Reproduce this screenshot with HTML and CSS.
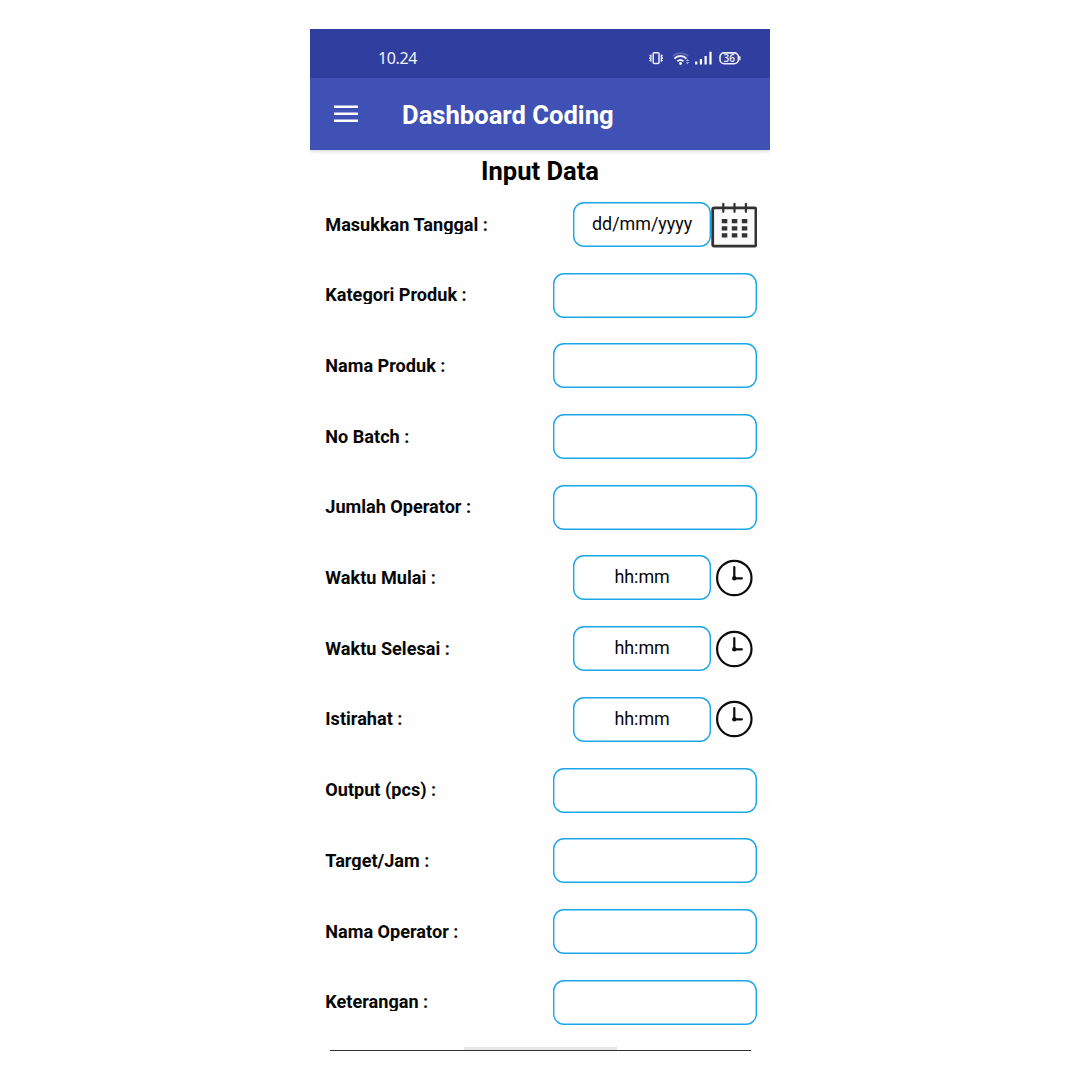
FILE: index.html
```html
<!DOCTYPE html>
<html lang="id">
<head>
<meta charset="utf-8">
<title>Dashboard Coding</title>
<link rel="stylesheet" href="styles.css">
</head>
<body>
<svg class="defs" width="0" height="0">
  <symbol id="clock" viewBox="0 0 46 46">
    <circle cx="23.300" cy="23" r="17.200" fill="none" stroke="#0b0b0b" stroke-width="2.200"/>
    <path d="M23.300 12v11.300h7.600" fill="none" stroke="#0b0b0b" stroke-width="2.200" stroke-linecap="round"/>
    <circle cx="23.300" cy="23.200" r="2.200" fill="#0b0b0b"/>
  </symbol>
</svg>
<main class="phone">
  <div class="status">
    <span class="time">10.24</span>
    <svg class="indicators" width="94" height="16" viewBox="0 0 94 16" fill="none" stroke="#eceefa">
      <rect x="5.200" y="2.700" width="5.800" height="10.800" rx="1" stroke-width="1.500"/>
      <path d="M2.900 4.500v7.300M13.300 4.500v7.300" stroke-width="1.300"/>
      <path d="M1.500 5.200l1 1.400-1 1.500 1 1.400-1 1.500M14.700 5.200l-1 1.400 1 1.500-1 1.400 1 1.500" stroke-width="1"/>
      <path d="M24.800 6.200a11.300 11.300 0 0 1 15.400 0" stroke="#5966b5" stroke-width="1.600"/>
      <path d="M26.400 8.600a8.400 8.400 0 0 1 12 0" stroke-width="2"/>
      <path d="M29.300 11.300a4.700 4.700 0 0 1 6.200 0" stroke-width="1.900"/>
      <circle cx="32.500" cy="13.500" r="1.400" fill="#fff" stroke="none"/>
      <path d="M37.800 11l1.700-2 1.700 2zM37.800 12.200l1.700 2 1.700-2z" fill="#b4bbe2" stroke="none"/>
      <path d="M48.200 14.500v-3M52.900 14.500v-5.500M57.600 14.500v-8.500M62.500 14.500V1.800" stroke="#fff" stroke-width="2.200"/>
      <rect x="72" y="2.900" width="18.400" height="10.800" rx="4.200" stroke-width="1.600"/>
      <path d="M91.800 6.300v4" stroke-width="1.400"/>
      <text class="battery" x="81.200" y="12" text-anchor="middle">36</text>
    </svg>
  </div>
  <header class="appbar">
    <svg class="menu" width="24" height="18" viewBox="0 0 24 18"><path d="M0 1.700h24M0 8.700h24M0 15.700h24" stroke="#fff" stroke-width="2.500"/></svg>
    <h1>Dashboard Coding</h1>
  </header>
  <section class="content">
    <h2>Input Data</h2>
    <div class="row"><label>Masukkan Tanggal :</label><div class="field short"><span class="date">dd/mm/yyyy</span></div>
      <svg class="icon" viewBox="0 0 46 46">
        <rect x="1.700" y="5.900" width="43.200" height="38.200" rx="1.500" fill="#fafafa" stroke="#333" stroke-width="2.800"/>
        <path d="M12.300 1.800v8M23.500 1.800v8M34.900 1.800v8" stroke="#333" stroke-width="2.200" stroke-linecap="round"/>
        <path d="M10.800 19.200h25.500M10.800 26.300h25.500M10.800 33.400h25.500" stroke="#333" stroke-width="4.300" stroke-dasharray="5.500 4.500"/>
      </svg></div>
    <div class="row"><label>Kategori Produk :</label><div class="field"></div></div>
    <div class="row"><label>Nama Produk :</label><div class="field"></div></div>
    <div class="row"><label>No Batch :</label><div class="field"></div></div>
    <div class="row"><label>Jumlah Operator :</label><div class="field"></div></div>
    <div class="row"><label>Waktu Mulai :</label><div class="field short"><span>hh:mm</span></div><svg class="icon"><use href="#clock"/></svg></div>
    <div class="row"><label>Waktu Selesai :</label><div class="field short"><span>hh:mm</span></div><svg class="icon"><use href="#clock"/></svg></div>
    <div class="row"><label>Istirahat :</label><div class="field short"><span>hh:mm</span></div><svg class="icon"><use href="#clock"/></svg></div>
    <div class="row"><label>Output (pcs) :</label><div class="field"></div></div>
    <div class="row"><label>Target/Jam :</label><div class="field"></div></div>
    <div class="row"><label>Nama Operator :</label><div class="field"></div></div>
    <div class="row"><label>Keterangan :</label><div class="field"></div></div>
  </section>
  <footer class="bottom"><div class="handle"></div><div class="edge"></div></footer>
</main>
</body>
</html>
```
FILE: styles.css
```css
* { box-sizing: border-box; }
body { margin: 0; background: #fff; font-family: Roboto, "Liberation Sans", sans-serif; color: #080808; }
.defs { display: block; }
.phone {
  width: 460px;
  height: 1022px;
  margin: 29px auto 0;
  display: flex;
  flex-direction: column;
  background: #fefefe;
  overflow: hidden;
}
.status {
  height: 49px;
  flex: none;
  display: flex;
  align-items: center;
  justify-content: space-between;
  padding: 9px 28.500px 0 68px;
  background: #303e9f;
}
.time { color: #f4f5fc; font: 400 16px/20px "Noto Sans", sans-serif; letter-spacing: -0.400px; }
.indicators { display: block; }
.battery { font: 600 10px "Open Sans", sans-serif; fill: #eceefa; stroke: none; }
.appbar {
  position: relative;
  height: 71.500px;
  flex: none;
  display: flex;
  align-items: center;
  padding-left: 24px;
  background: #3f51b5;
  box-shadow: 0 1px 4px rgba(0, 0, 0, 0.18);
  clip-path: inset(0 0 -8px 0);
}
.menu { display: block; }
h1 { margin: 2px 0 0 44px; color: #fff; font-size: 25.600px; line-height: 32px; font-weight: 700; white-space: nowrap; }
.content { flex: none; }
h2 { margin: 0; height: 39.700px; font-size: 25.500px; line-height: 42px; font-weight: 700; text-align: center; color: #000; }
.row { height: 70.700px; display: flex; align-items: center; padding: 0 12.800px 0 15.300px; }
label { flex: 1; height: 19px; margin-top: -0.800px; line-height: 20px; overflow: hidden; font-size: 18.100px; font-weight: 700; white-space: nowrap; }
.field {
  width: 204.500px;
  height: 45px;
  flex: none;
  display: flex;
  align-items: center;
  justify-content: center;
  border-radius: 11px;
  background: #fff;
  box-shadow: inset 0 0 0 1.400px #1ba6e8;
  font-size: 17.900px;
  line-height: 22px;
}
.field span { margin-top: -1px; }
.short { width: 138.200px; }
.icon { width: 46px; height: 46px; flex: none; display: block; }
.bottom { margin-top: auto; height: 4px; flex: none; display: flex; flex-direction: column; align-items: center; }
.handle { width: 153px; height: 3px; background: #e6e6e6; }
.edge { width: 421px; height: 1px; background: #333; }
```
